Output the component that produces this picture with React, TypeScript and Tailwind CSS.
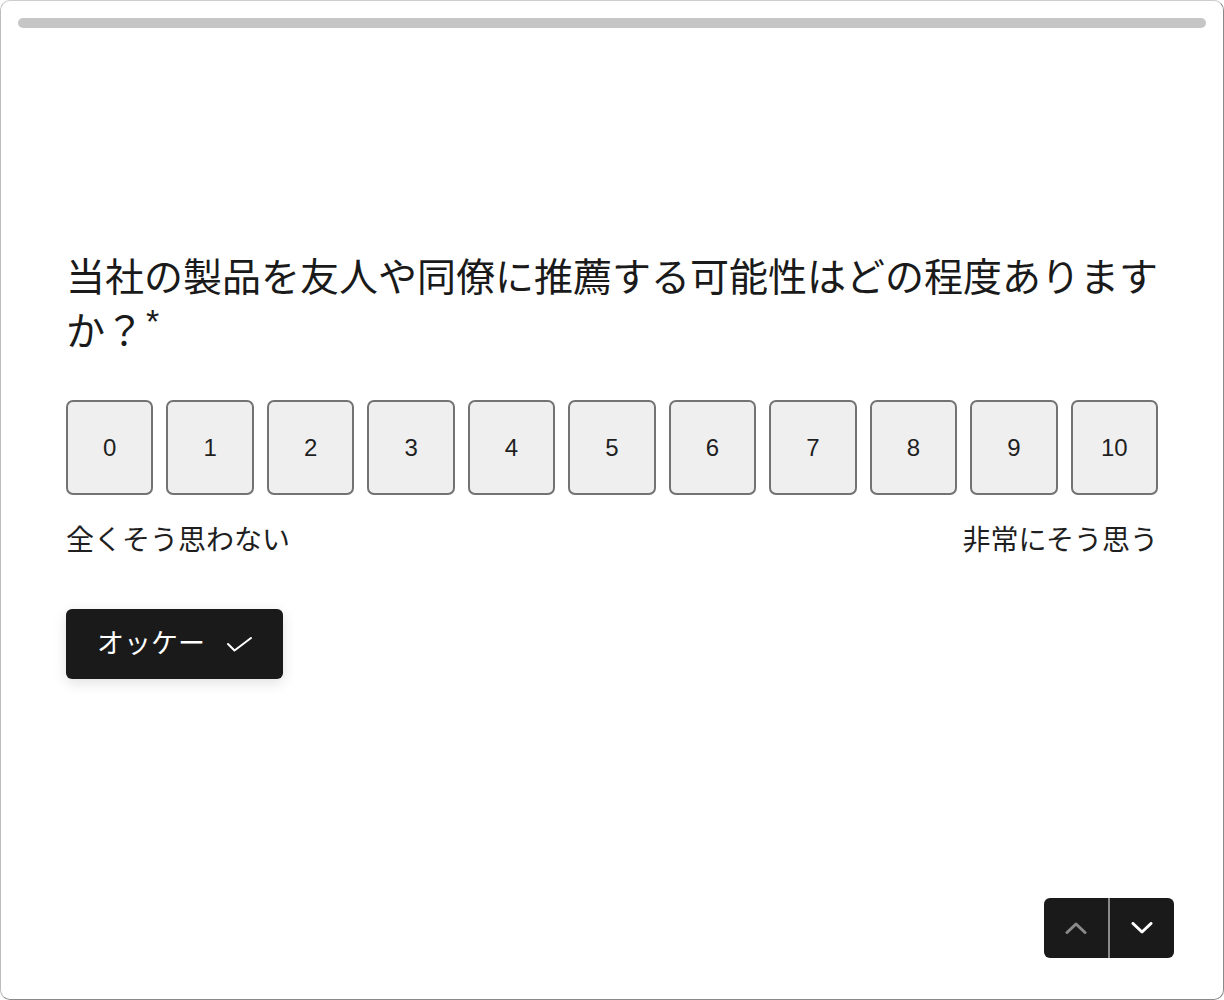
import React from 'react';

const font = { fontFamily: '"Liberation Sans", "Noto Sans CJK JP", sans-serif' };

const scores = [0, 1, 2, 3, 4, 5, 6, 7, 8, 9, 10];

export default function App() {
  return (
    <div className="w-[1224px] h-[1000px] bg-white" style={font}>
      <div className="relative h-full rounded-[10px] border border-t-[#cdcdcd] border-l-[#bdbdbd] border-r-[#8a8a8a] border-b-[#8a8a8a] bg-white overflow-hidden">
        {/* progress */}
        <div className="px-[17px] pt-[17px]">
          <div className="h-[10px] w-full rounded-full bg-[#c6c6c6]" />
        </div>

        <div className="px-[65px] pt-[223px]">
          <h1 className="-mr-[10px] text-[39px] leading-[54px] text-[#1a1a1a] font-normal">
            当社の製品を友人や同僚に推薦する可能性はどの程度ありますか？
            <span className="relative -top-[12px] ml-[2px] text-[34px] leading-none">*</span>
          </h1>

          <div className="mt-[41px] grid grid-cols-11 gap-[13px]">
            {scores.map((n) => (
              <button
                key={n}
                className="h-[95px] rounded-[7px] border-2 border-[#737373] bg-[#efefef] text-[24px] text-[#1f1f1f]"
              >
                {n}
              </button>
            ))}
          </div>

          <div className="mt-[25px] flex justify-between text-[28px] leading-[42px] text-[#1f1f1f]">
            <span>全くそう思わない</span>
            <span>非常にそう思う</span>
          </div>

          <button className="mt-[47px] flex h-[70px] items-center gap-[22px] rounded-[6px] bg-[#1a1a1a] px-[31px] text-[27px] text-white shadow-[0_4px_14px_rgba(0,0,0,0.12)]">
            <span>オッケー</span>
            <svg width="25" height="15" viewBox="0 0 25 15" fill="none">
              <path d="M1 7L7.5 13.5L24 1" stroke="white" strokeWidth="2" strokeLinecap="round" strokeLinejoin="round" />
            </svg>
          </button>
        </div>

        {/* up / down nav */}
        <div className="absolute bottom-[41px] right-[49px] flex h-[60px] overflow-hidden rounded-[6px] bg-[#1a1a1a]">
          <button className="flex w-[64px] items-center justify-center">
            <svg width="22" height="12" viewBox="0 0 22 12" fill="none">
              <path d="M2 10.5L11 2L20 10.5" stroke="#8a8a8a" strokeWidth="3" strokeLinecap="round" strokeLinejoin="round" />
            </svg>
          </button>
          <div className="w-[2px] bg-[#8a8a8a]" />
          <button className="flex w-[64px] items-center justify-center">
            <svg width="22" height="12" viewBox="0 0 22 12" fill="none">
              <path d="M2 1.5L11 10L20 1.5" stroke="white" strokeWidth="3" strokeLinecap="round" strokeLinejoin="round" />
            </svg>
          </button>
        </div>
      </div>
    </div>
  );
}
